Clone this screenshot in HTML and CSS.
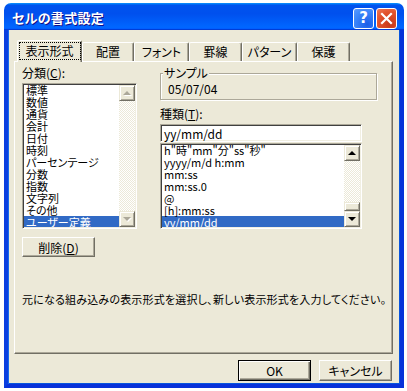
FILE: index.html
```
<!DOCTYPE html>
<html lang="ja">
<head>
    <meta charset="UTF-8">
    <title>セルの書式設定</title>
    <link rel="stylesheet" href="styles.css">
</head>
<body>

<div class="window">
    <div class="titlebar">
        <span class="title">セルの書式設定</span>
        <span class="cap help">?</span>
        <span class="cap close">
            <svg width="13" height="13" viewBox="0 0 13 13"><path d="M2 2 L11 11 M11 2 L2 11" stroke="#fff" stroke-width="2.2" stroke-linecap="square"/></svg>
        </span>
    </div>

    <div class="client">
        <!-- タブ -->
        <div class="tabs">
            <div class="tab selected"><span class="focus">表示形式</span></div>
            <div class="tab w52">配置</div>
            <div class="tab w55">フォント</div>
            <div class="tab w53">罫線</div>
            <div class="tab w55">パターン</div>
            <div class="tab w53">保護</div>
        </div>

        <div class="panel">
            <div class="cols">
                <div class="col-left">
                    <div class="label">分類(<u>C</u>):</div>
                    <div class="listbox cat">
                        <ul class="items">
                            <li>標準</li>
                            <li>数値</li>
                            <li>通貨</li>
                            <li>会計</li>
                            <li>日付</li>
                            <li>時刻</li>
                            <li>パーセンテージ</li>
                            <li>分数</li>
                            <li>指数</li>
                            <li>文字列</li>
                            <li>その他</li>
                            <li class="sel">ユーザー定義</li>
                        </ul>
                        <div class="vscroll disabled">
                            <div class="sbtn"><i class="arrow up"></i></div>
                            <div class="track"></div>
                            <div class="sbtn"><i class="arrow down"></i></div>
                        </div>
                    </div>
                    <button class="btn del">削除(<u>D</u>)</button>
                </div>

                <div class="col-right">
                    <div class="sample">
                        <span class="legend">サンプル</span>
                        <div class="sample-value">05/07/04</div>
                    </div>
                    <div class="label kind">種類(<u>T</u>):</div>
                    <div class="textbox">yy/mm/dd</div>
                    <div class="listbox fmt">
                        <ul class="items">
                            <li>h"時"mm"分"ss"秒"</li>
                            <li>yyyy/m/d h:mm</li>
                            <li>mm:ss</li>
                            <li>mm:ss.0</li>
                            <li>@</li>
                            <li>[h]:mm:ss</li>
                            <li class="sel">yy/mm/dd</li>
                        </ul>
                        <div class="vscroll">
                            <div class="sbtn"><i class="arrow up"></i></div>
                            <div class="track"></div>
                            <div class="thumb"></div>
                            <div class="sbtn"><i class="arrow down"></i></div>
                        </div>
                    </div>
                </div>
            </div>

            <p class="desc">元になる組み込みの表示形式を選択し、新しい表示形式を入力してください。</p>
        </div>

        <div class="buttons">
            <button class="btn ok">OK</button>
            <button class="btn">キャンセル</button>
        </div>
    </div>
</div>

</body>
</html>
```

FILE: styles.css
```
body {
    margin: 0;
    background: #fff;
    font-family: "Noto Sans CJK JP", sans-serif;
    font-size: 12px;
    font-feature-settings: "palt";
    color: #000;
}
ul {
    list-style: none;
    margin: 0;
    padding: 0;
}
u {
    text-decoration: underline;
    text-underline-offset: 1px;
}

/* ウィンドウ枠 */
.window {
    margin: 3px 0 0 4px;
    width: 400px;
    height: 385px;
    display: flex;
    flex-direction: column;
}
.titlebar {
    height: 27px;
    flex: none;
    box-sizing: border-box;
    display: flex;
    align-items: center;
    padding: 0 7px 0 8px;
    border-radius: 7px 7px 0 0;
    background: linear-gradient(180deg, #0997ff, #0053ee 8%, #0050ee 40%, #0066ff 88%, #0066ff 93%, #005bff 95%, #003dd7 96%, #003dd7);
}
.title {
    flex: 1;
    color: #fff;
    font-weight: bold;
    font-size: 13px;
    letter-spacing: 0.3px;
    text-shadow: 1px 1px #0f1089;
    margin-top: 1px;
}
.cap {
    width: 21px;
    height: 21px;
    box-sizing: border-box;
    border: 1px solid #fff;
    border-radius: 3px;
    display: flex;
    align-items: center;
    justify-content: center;
    margin-top: 3px;
    color: #fff;
}
.help {
    margin-right: 2px;
    background: radial-gradient(circle at 70% 80%, #1b5ee8, #3a85fa 60%, #5a9bff);
    font-family: "DejaVu Sans", sans-serif;
    font-weight: bold;
    font-size: 15px;
}
.close {
    background: radial-gradient(circle at 70% 80%, #c6381a, #e2532d 60%, #ec7a5a);
}

.client {
    flex: 1;
    background: #ECE9D8;
    border: 4px solid #0831d9;
    border-top: 0;
    border-left-color: #0a3ee0;
    box-shadow: inset 1px 0 #166aee, inset -1px -1px #0855dd;
    display: flex;
    flex-direction: column;
}

/* タブ */
.tabs {
    height: 31px;
    flex: none;
    display: flex;
    align-items: flex-end;
    padding-left: 9px;
}
.tab {
    height: 19px;
    box-sizing: border-box;
    border: 1px solid;
    border-bottom: 0;
    border-color: #fff #716F64 transparent #fff;
    border-radius: 2px 2px 0 0;
    box-shadow: inset -1px 0 #ACA899;
    text-align: center;
    line-height: 17px;
}
.tab.selected {
    width: 65px;
    height: 22px;
    margin-bottom: -1px;
    background: #ECE9D8;
    position: relative;
    z-index: 1;
    padding-top: 1px;
}
.w52 { width: 52px; }
.w53 { width: 53px; }
.w55 { width: 55px; }
.focus {
    display: inline-block;
    width: 60px;
    height: 16px;
    box-sizing: border-box;
    outline: 1px dotted #000;
    line-height: 15px;
}

.panel {
    margin-left: 6px;
    width: 379px;
    height: 293px;
    flex: none;
    box-sizing: border-box;
    border: 1px solid;
    border-color: #fff #716F64 #716F64 #fff;
    box-shadow: inset -1px -1px #ACA899;
    padding: 3px 0 0 7px;
}
.cols {
    display: flex;
}
.col-left {
    width: 115px;
}
.col-right {
    width: 217px;
    margin-left: 23px;
}
.label {
    height: 18px;
    line-height: 16px;
}

/* リストボックス */
.listbox {
    box-sizing: border-box;
    background: #fff;
    border: 1px solid;
    border-color: #ACA899 #fff #fff #ACA899;
    box-shadow: inset 1px 1px #404040, inset -1px -1px #F1EFE2;
    padding: 1px;
    display: flex;
}
.listbox .items {
    flex: 1;
    overflow: hidden;
}
.listbox li {
    height: 12px;
    line-height: 12px;
    font-size: 11px;
    padding-left: 2px;
    white-space: nowrap;
}
.listbox li:first-child {
    margin-top: -1px;
}
.listbox li.sel {
    background: #316AC5;
    color: #fff;
}
.cat {
    width: 115px;
    height: 146px;
}
.fmt {
    width: 202px;
    height: 86px;
}

/* スクロールバー */
.vscroll {
    width: 16px;
    display: flex;
    flex-direction: column;
}
.sbtn, .thumb {
    box-sizing: border-box;
    background: #ECE9D8;
    border: 1px solid;
    border-color: #ECE9D8 #716F64 #716F64 #ECE9D8;
    box-shadow: inset 1px 1px #fff, inset -1px -1px #ACA899;
}
.sbtn {
    height: 16px;
    display: flex;
    align-items: center;
    justify-content: center;
}
.thumb {
    height: 9px;
}
.track {
    flex: 1;
    background: repeating-conic-gradient(#fff 0 25%, #ECE9D8 0 50%) 0 0 / 2px 2px;
}
.arrow {
    width: 0;
    height: 0;
    border-left: 4px solid transparent;
    border-right: 4px solid transparent;
}
.arrow.up {
    border-bottom: 4px solid #000;
}
.arrow.down {
    border-top: 4px solid #000;
}
.disabled .arrow.up {
    border-bottom-color: #ACA899;
    filter: drop-shadow(1px 1px 0 #fff);
}
.disabled .arrow.down {
    border-top-color: #ACA899;
    filter: drop-shadow(1px 1px 0 #fff);
}

/* 右側 */
.sample {
    position: relative;
    margin-top: 8px;
    height: 27px;
    box-sizing: border-box;
    border: 1px solid #ACA899;
    box-shadow: inset 1px 1px #fff, 1px 1px #fff;
    padding: 8px 0 0 7px;
}
.legend {
    position: absolute;
    top: -8px;
    left: 2px;
    padding: 0 1px;
    background: #ECE9D8;
    line-height: 14px;
}
.sample-value {
    line-height: 14px;
}
.kind {
    margin-top: 5px;
    height: 18px;
    line-height: 18px;
    margin-bottom: 1px;
}
.textbox {
    width: 202px;
    height: 18px;
    box-sizing: border-box;
    background: #fff;
    border: 1px solid;
    border-color: #ACA899 #fff #fff #ACA899;
    box-shadow: inset 1px 1px #404040, inset -1px -1px #F1EFE2;
    padding: 1px 0 0 3px;
    line-height: 15px;
}
.fmt {
    margin-top: 1px;
}

/* ボタン */
.btn {
    font-family: inherit;
    font-size: 12px;
    font-feature-settings: "palt";
    color: #000;
    width: 73px;
    height: 21px;
    padding: 0;
    background: #ECE9D8;
    border: 1px solid;
    border-color: #fff #716F64 #716F64 #fff;
    box-shadow: inset -1px -1px #ACA899;
    line-height: 17px;
}
.del {
    margin-top: 8px;
    height: 20px;
}
.ok {
    border-color: #000;
    box-shadow: inset 1px 1px #fff, inset -1px -1px #716F64, inset -2px -2px #ACA899;
}
.desc {
    margin: 34px 0 0;
    line-height: 16px;
    font-size: 11px;
    letter-spacing: 0.2px;
    white-space: nowrap;
}
.buttons {
    display: flex;
    justify-content: flex-end;
    gap: 8px;
    padding-right: 8px;
    margin-top: 6px;
}
```
